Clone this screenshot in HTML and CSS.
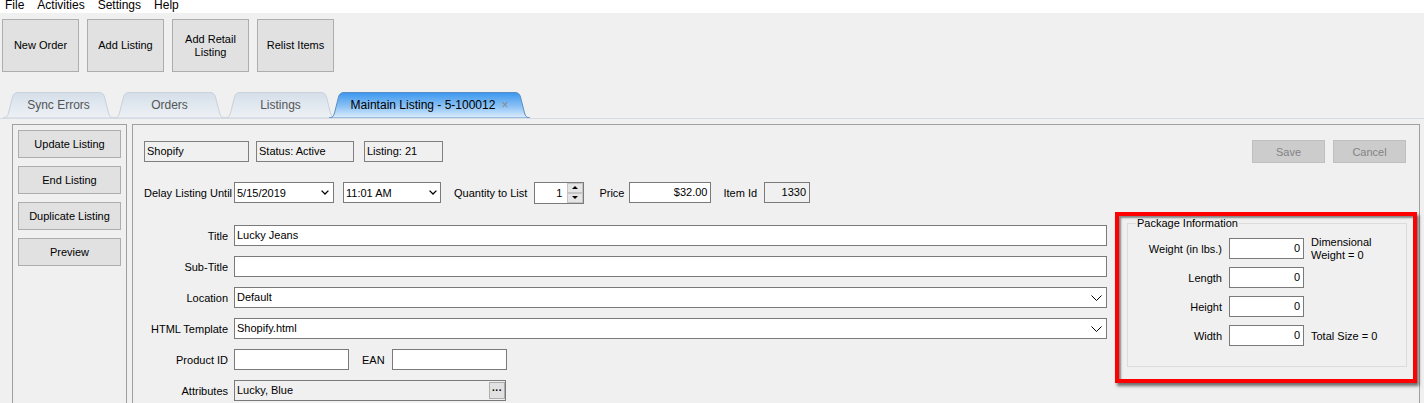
FILE: index.html
```html
<!DOCTYPE html>
<html lang="en">
<head>
  <meta charset="UTF-8" />
  <title>Maintain Listing - 5-100012</title>
  <link rel="stylesheet" href="styles.css">
</head>
<body>
  <svg class="defs" width="0" height="0">
    <defs>
      <linearGradient id="tabIdle" x1="0" y1="0" x2="0" y2="1">
        <stop offset="0" stop-color="#d5dfea" />
        <stop offset="1" stop-color="#edf1f5" />
      </linearGradient>
      <linearGradient id="tabActive" x1="0" y1="0" x2="0" y2="1">
        <stop offset="0" stop-color="#3b97ee" />
        <stop offset="0.55" stop-color="#8cc2f5" />
        <stop offset="1" stop-color="#deeefc" />
      </linearGradient>
    </defs>
  </svg>

  <div class="menubar">
    <span>File</span>
    <span>Activities</span>
    <span>Settings</span>
    <span>Help</span>
  </div>

  <div class="toolbar">
    <button class="tool-btn">New Order</button>
    <button class="tool-btn">Add Listing</button>
    <button class="tool-btn">Add Retail Listing</button>
    <button class="tool-btn">Relist Items</button>
  </div>

  <div class="tabs">
    <div class="tab">
      <svg class="tab-shape" viewBox="0 0 111 26"><path d="M0 26 C3 26 4.5 24.5 5.5 21 L9.5 5 C10.3 2 12 0.5 15 0.5 L96 0.5 C99 0.5 100.7 2 101.5 5 L105.5 21 C106.5 24.5 108 26 111 26 Z" fill="url(#tabIdle)" stroke="#c9d1db" /></svg>
      <span>Sync Errors</span>
    </div>
    <div class="tab">
      <svg class="tab-shape" viewBox="0 0 111 26"><path d="M0 26 C3 26 4.5 24.5 5.5 21 L9.5 5 C10.3 2 12 0.5 15 0.5 L96 0.5 C99 0.5 100.7 2 101.5 5 L105.5 21 C106.5 24.5 108 26 111 26 Z" fill="url(#tabIdle)" stroke="#c9d1db" /></svg>
      <span>Orders</span>
    </div>
    <div class="tab">
      <svg class="tab-shape" viewBox="0 0 111 26"><path d="M0 26 C3 26 4.5 24.5 5.5 21 L9.5 5 C10.3 2 12 0.5 15 0.5 L96 0.5 C99 0.5 100.7 2 101.5 5 L105.5 21 C106.5 24.5 108 26 111 26 Z" fill="url(#tabIdle)" stroke="#c9d1db" /></svg>
      <span>Listings</span>
    </div>
    <div class="tab active">
      <svg class="tab-shape" viewBox="0 0 201 26"><path d="M0 26 C3 26 4.5 24.5 5.5 21 L9.5 5 C10.3 2 12 0.5 15 0.5 L186 0.5 C189 0.5 190.7 2 191.5 5 L195.5 21 C196.5 24.5 198 26 201 26 Z" fill="url(#tabActive)" stroke="#5a8dc4" /></svg>
      <span>Maintain Listing - 5-100012</span>
      <span class="tab-close">×</span>
    </div>
  </div>

  <div class="workspace">
    <div class="side-group">
      <button class="side-btn">Update Listing</button>
      <button class="side-btn">End Listing</button>
      <button class="side-btn">Duplicate Listing</button>
      <button class="side-btn">Preview</button>
    </div>

    <div class="main-group">
      <div class="row-status">
        <div class="info-box info-shop">Shopify</div>
        <div class="info-box info-status">Status: Active</div>
        <div class="info-box info-listing">Listing: 21</div>
        <div class="actions">
          <button class="act-btn" disabled>Save</button>
          <button class="act-btn" disabled>Cancel</button>
        </div>
      </div>

      <div class="row-delay">
        <span class="lbl-delay">Delay Listing Until</span>
        <div class="combo combo-date">
          <span>5/15/2019</span>
          <svg width="8" height="5" viewBox="0 0 8 5"><path d="M0.6 0.6 L4 4 L7.4 0.6" fill="none" stroke="#000" stroke-width="1.3" /></svg>
        </div>
        <div class="combo combo-time">
          <span>11:01 AM</span>
          <svg width="8" height="5" viewBox="0 0 8 5"><path d="M0.6 0.6 L4 4 L7.4 0.6" fill="none" stroke="#000" stroke-width="1.3" /></svg>
        </div>
        <span class="lbl-qty">Quantity to List</span>
        <div class="spin">
          <span class="spin-val">1</span>
          <div class="spin-btns">
            <span class="spin-up"></span>
            <span class="spin-down"></span>
          </div>
        </div>
        <span class="lbl-price">Price</span>
        <div class="field num price">$32.00</div>
        <span class="lbl-item">Item Id</span>
        <div class="field num readonly item-id">1330</div>
      </div>

      <div class="body">
        <div class="form">
          <label class="lbl">Title</label>
          <div class="field">Lucky Jeans</div>

          <label class="lbl">Sub-Title</label>
          <div class="field"></div>

          <label class="lbl">Location</label>
          <div class="field select">
            <span>Default</span>
            <svg width="11" height="6" viewBox="0 0 11 6"><path d="M0.5 0.5 L5.5 5.5 L10.5 0.5" fill="none" stroke="#000" stroke-width="1" /></svg>
          </div>

          <label class="lbl">HTML Template</label>
          <div class="field select">
            <span>Shopify.html</span>
            <svg width="11" height="6" viewBox="0 0 11 6"><path d="M0.5 0.5 L5.5 5.5 L10.5 0.5" fill="none" stroke="#000" stroke-width="1" /></svg>
          </div>

          <label class="lbl">Product ID</label>
          <div class="pair">
            <div class="field short"></div>
            <span class="lbl-ean">EAN</span>
            <div class="field short"></div>
          </div>

          <label class="lbl">Attributes</label>
          <div class="field readonly attrs">
            <span>Lucky, Blue</span>
            <button class="dots">···</button>
          </div>
        </div>

        <div class="highlight">
          <fieldset class="package">
            <legend>Package Information</legend>
            <div class="pkg-grid">
              <span class="pkg-lbl">Weight (in lbs.)</span>
              <div class="field num">0</div>
              <span class="pkg-note two-line">Dimensional<br>Weight = 0</span>

              <span class="pkg-lbl">Length</span>
              <div class="field num">0</div>
              <span></span>

              <span class="pkg-lbl">Height</span>
              <div class="field num">0</div>
              <span></span>

              <span class="pkg-lbl">Width</span>
              <div class="field num">0</div>
              <span class="pkg-note">Total Size = 0</span>
            </div>
          </fieldset>
        </div>
      </div>
    </div>
  </div>
</body>
</html>
```

FILE: styles.css
```css
body {
  margin: 0;
  height: 403px;
  overflow: hidden;
  background: #f0f0f0;
  color: #000;
  font-family: "Liberation Sans", Arial, sans-serif;
  font-size: 11px;
}

button {
  font: inherit;
  color: inherit;
  margin: 0;
  padding: 0;
}

.defs {
  position: absolute;
}

.menubar {
  display: flex;
  gap: 13px;
  height: 13px;
  padding-left: 5px;
  background: #fff;
  font-size: 12px;
  line-height: 10px;
}

.toolbar {
  display: flex;
  gap: 8px;
  padding: 6px 0 20px 2px;
}

.tool-btn {
  width: 77px;
  height: 53px;
  background: #e1e1e1;
  border: 1px solid #adadad;
  line-height: 13px;
}

/* tabs */
.tabs {
  display: flex;
  height: 26px;
  padding-left: 3px;
  border-bottom: 1px solid #d6dce3;
}

.tab {
  position: relative;
  z-index: 0;
  width: 111px;
  height: 26px;
  display: flex;
  align-items: center;
  justify-content: center;
  font-size: 12px;
  color: #555;
}

.tab-shape {
  position: absolute;
  top: 0;
  left: 0;
  width: 100%;
  height: 100%;
  z-index: -1;
}

.tab.active {
  width: 201px;
  margin-left: -7px;
  z-index: 1;
  color: #000;
}

.tab-close {
  margin-left: 6px;
  color: #8a8a8a;
}

/* work area */
.workspace {
  display: flex;
  gap: 5px;
  padding: 5px 4px 0 12px;
}

.side-group {
  width: 115px;
  height: 300px;
  box-sizing: border-box;
  border: 1px solid #a0a0a0;
  padding: 5px;
  display: flex;
  flex-direction: column;
  gap: 8px;
}

.side-btn {
  height: 28px;
  background: #e1e1e1;
  border: 1px solid #adadad;
}

.main-group {
  flex: 1;
  height: 300px;
  border: 1px solid #a0a0a0;
  padding: 15px 13px 0 11px;
}

.row-status {
  display: flex;
  align-items: center;
  height: 23px;
}

.info-box {
  height: 21px;
  box-sizing: border-box;
  border: 1px solid #7f7f7f;
  padding-left: 2px;
  line-height: 19px;
}

.info-shop { width: 105px; }
.info-status { width: 98px; margin-left: 7px; }
.info-listing { width: 79px; margin-left: 10px; }

.actions {
  margin-left: auto;
  display: flex;
  gap: 8px;
}

.act-btn {
  width: 73px;
  height: 23px;
  background: #cccccc;
  border: 1px solid #bfbfbf;
  color: #838383;
}

.row-delay {
  display: flex;
  align-items: center;
  height: 23px;
  margin-top: 18px;
}

.lbl-delay { width: 90px; }
.lbl-qty { margin-left: 13px; }
.lbl-price { margin-left: 15px; }
.lbl-item { margin-left: 12px; }

.combo {
  height: 21px;
  box-sizing: border-box;
  border: 1px solid #7a7a7a;
  background: #fff;
  display: flex;
  align-items: center;
  justify-content: space-between;
  padding: 0 4px 0 2px;
}

.combo-date { width: 100px; }
.combo-time { width: 98px; margin-left: 9px; padding-right: 3px; }

.spin {
  width: 50px;
  height: 22px;
  box-sizing: border-box;
  margin-left: 7px;
  border: 1px solid #7a7a7a;
  background: #fff;
  display: flex;
}

.spin-val {
  flex: 1;
  text-align: right;
  padding-right: 5px;
  line-height: 20px;
}

.spin-btns {
  width: 16px;
  display: flex;
  flex-direction: column;
}

.spin-up,
.spin-down {
  flex: 1;
  display: flex;
  align-items: center;
  justify-content: center;
  background: #e5e5e5;
  border: 1px solid #c4c4c4;
}

.spin-up::after {
  content: "";
  border-left: 3px solid transparent;
  border-right: 3px solid transparent;
  border-bottom: 3px solid #000;
}

.spin-down::after {
  content: "";
  border-left: 3px solid transparent;
  border-right: 3px solid transparent;
  border-top: 3px solid #000;
}

.field {
  height: 21px;
  box-sizing: border-box;
  border: 1px solid #7a7a7a;
  background: #fff;
  padding: 0 3px 0 2px;
  line-height: 19px;
  white-space: nowrap;
}

.field.num { text-align: right; }
.field.readonly { background: #f0f0f0; }

.price { width: 82px; margin-left: 5px; }
.item-id { width: 46px; margin-left: 7px; }

/* listing form */
.body {
  display: flex;
  gap: 8px;
  margin-top: 8px;
  margin-right: -11px;
}

.form {
  flex: 1;
  display: grid;
  grid-template-columns: 84px 1fr;
  column-gap: 6px;
  row-gap: 10px;
  align-items: center;
  align-content: start;
  padding-top: 13px;
}

.lbl { text-align: right; }

.field.select {
  display: flex;
  align-items: center;
  justify-content: space-between;
  padding-right: 4px;
}

.pair {
  display: flex;
  align-items: center;
}

.field.short { width: 115px; }

.lbl-ean {
  margin: 0 7px 0 13px;
}

.attrs {
  width: 272px;
  display: flex;
  align-items: center;
  justify-content: space-between;
  padding-right: 0;
}

.dots {
  width: 16px;
  height: 17px;
  background: #e1e1e1;
  border: 1px solid #adadad;
  font-size: 10px;
  font-weight: bold;
  line-height: 13px;
}

/* package box */
.highlight {
  width: 302px;
  box-sizing: border-box;
  align-self: flex-start;
  border: 4px solid #f00;
  padding: 1px 6px 12px 8px;
  box-shadow: 2px 3px 3px rgba(0, 0, 0, 0.55), inset 2px 2px 2px rgba(0, 0, 0, 0.45);
}

.package {
  margin: 0;
  border: 1px solid #dcdcdc;
  padding: 8px 6px 20px 8px;
}

.package legend {
  padding: 0 1px;
  line-height: 13px;
}

.pkg-grid {
  display: grid;
  grid-template-columns: 86px 75px auto;
  grid-template-rows: repeat(4, 21px);
  column-gap: 7px;
  row-gap: 8px;
  align-items: center;
}

.pkg-lbl { text-align: right; }

.pkg-note.two-line {
  align-self: start;
  margin-top: -2px;
  line-height: 13px;
  white-space: nowrap;
}
```
